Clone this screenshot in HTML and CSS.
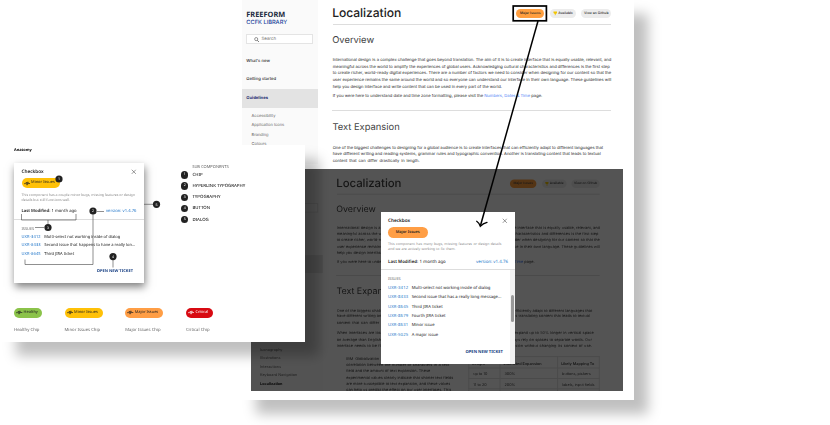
FILE: index.html
```html
<!DOCTYPE html>
<html lang="en">
<head>
<meta charset="utf-8">
<title>Freeform – Localization</title>
<link rel="stylesheet" href="styles.css">
</head>
<body>
<svg class="defs" width="0" height="0">
  <symbol id="pulse" viewBox="0 0 8 6"><path d="M0 3.2H2L2.9 1.4 3.7 5 4.7 1 5.5 3.7 6 3H8" fill="none" stroke="currentColor" stroke-width=".8" stroke-linejoin="round"/></symbol>
  <symbol id="close" viewBox="0 0 6 6"><path d="M.8.8 5.2 5.2M5.2.8.8 5.2" fill="none" stroke="#555" stroke-width=".65"/></symbol>
  <symbol id="search" viewBox="0 0 6 6"><circle cx="2.4" cy="2.3" r="1.7" fill="none" stroke="#444" stroke-width=".6"/><path d="M3.6 3.6 5.5 5.6" stroke="#444" stroke-width=".8"/></symbol>
  <symbol id="trophy" viewBox="0 0 5 5"><path d="M.5.6H4.5V1.8Q4.4 2.8 3.3 3L2.8 3.7V4.2H3.4V4.8H1.6V4.2H2.2V3.7L1.7 3Q.6 2.8.5 1.8Z" fill="#f2c500"/></symbol>
</svg>

<main class="canvas">
  <section class="board board-page">
    <div class="site">
      <nav class="side">
        <div class="brand">FREEFORM</div>
        <div class="library">CCFK LIBRARY</div>
        <div class="search"><svg><use href="#search"/></svg>Search</div>
        <div class="nav">What's new</div>
        <div class="nav">Getting started</div>
        <div class="nav current">Guidelines</div>
        <ul class="sub"><li>Accessibility</li><li>Application Icons</li><li>Branding</li><li>Colours</li></ul>
      </nav>
      <article class="main">
        <header class="head">
          <h1>Localization</h1>
          <div class="tags"><span class="tag major">Major Issues</span><span class="tag award"><svg><use href="#trophy"/></svg>Available</span><span class="tag github">View on Github</span></div>
        </header>
        <h2>Overview</h2>
        <div class="copy overview">
          <p>International design is a complex challenge that goes beyond translation. The aim of it is to create interface that is equally usable, relevant, and</p>
          <p>meaningful across the world to amplify the experiences of global users. Acknowledging cultural characteristics and differences is the first step</p>
          <p>to create richer, world-ready digital experiences. There are a number of factors we need to consider when designing for our content so that the</p>
          <p>user experience remains the same around the world and so everyone can understand our interface in their own language. These guidelines will</p>
          <p>help you design interface and write content that can be used in every part of the world.</p>
          <p>If you were here to understand date and time zone formatting, please visit the <a>Numbers, Dates &amp; Time</a> page.</p>
        </div>
        <h2 class="second">Text Expansion</h2>
        <div class="copy expansion">
          <p>One of the biggest challenges to designing for a global audience is to create interfaces that can efficiently adapt to different languages that</p>
          <p>have different writing and reading systems, grammar rules and typographic convention. Another is translating content that leads to textual</p>
          <p>content that can differ drastically in length.</p>
        </div>
      </article>
    </div>
  </section>

  <section class="board board-modal">
    <div class="site scaled">
      <nav class="side">
        <div class="brand">FREEFORM</div>
        <div class="library">CCFK LIBRARY</div>
        <div class="search"><svg><use href="#search"/></svg>Search</div>
        <div class="nav">What's new</div>
        <div class="nav">Getting started</div>
        <div class="nav current">Guidelines</div>
        <ul class="sub"><li>Accessibility</li><li>Application Icons</li><li>Branding</li><li>Colours</li><li>Components</li><li>Content</li><li>Data</li><li>Forms</li><li>Iconography</li><li>Illustrations</li><li>Interactions</li><li>Keyboard Navigation</li><li class="on">Localization</li></ul>
      </nav>
      <article class="main">
        <header class="head">
          <h1>Localization</h1>
          <div class="tags"><span class="tag major">Major Issues</span><span class="tag award"><svg><use href="#trophy"/></svg>Available</span><span class="tag github">View on Github</span></div>
        </header>
        <h2>Overview</h2>
        <div class="copy overview">
          <p>International design is a complex challenge that goes beyond translation. The aim of it is to create interface that is equally usable, relevant, and</p>
          <p>meaningful across the world to amplify the experiences of global users. Acknowledging cultural characteristics and differences is the first step</p>
          <p>to create richer, world-ready digital experiences. There are a number of factors we need to consider when designing for our content so that the</p>
          <p>user experience remains the same around the world and so everyone can understand our interface in their own language. These guidelines will</p>
          <p>help you design interface and write content that can be used in every part of the world.</p>
          <p>If you were here to understand date and time zone formatting, please visit the <a>Numbers, Dates &amp; Time</a> page.</p>
        </div>
        <h2 class="second">Text Expansion</h2>
        <div class="copy expansion">
          <p>One of the biggest challenges to designing for a global audience is to create interfaces that can efficiently adapt to different languages that</p>
          <p>have different writing and reading systems, grammar rules and typographic convention. Another is translating content that leads to textual</p>
          <p>content that can differ drastically in length.</p>
        </div>
        <div class="copy growth">
          <p>When interfaces are localized from English to other languages, the length of the text can often expand up to 50% longer in vertical space</p>
          <p>on average than English text, and you should know that some of the other languages do not always rely on spaces to separate words. Our</p>
          <p>interface needs to be flexible enough for every language so that it is able to handle text expansion without changing its context of use.</p>
        </div>
        <div class="split">
          <div class="copy note">
            <p>IBM Globalization provides a useful</p>
            <p>correlation between the number of characters in a text</p>
            <p>field and the amount of text expansion. These</p>
            <p>experimental values clearly indicate that shorter text fields</p>
            <p>are more susceptible to text expansion, and these values</p>
            <p>can help us predict the effect on our user interfaces. This</p>
          </div>
          <table>
            <tr><th>Length</th><th>Estimated Expansion</th><th>Likely Mapping To</th></tr>
            <tr><td>up to 10</td><td>300%</td><td>buttons, pickers</td></tr>
            <tr><td>11 to 20</td><td>200%</td><td>labels, input fields</td></tr>
            <tr><td></td><td></td><td></td></tr>
          </table>
        </div>
      </article>
    </div>
    <div class="scrim"></div>
  </section>

  <section class="board board-anatomy">
    <h3>Anatomy</h3>
    <div class="anatomy">
      <div class="dialog minor-dialog">
        <div class="title"><b>Checkbox</b><svg><use href="#close"/></svg></div>
        <span class="chip amber"><svg><use href="#pulse"/></svg>Minor Issues</span>
        <div class="desc"><p>This component has a couple minor bugs, missing features or design</p><p class="short">details but still functions well.</p></div>
        <div class="meta"><span><b>Last Modified:</b> 1 month ago</span><a>version: v1.4.76</a></div>
        <div class="issues">
          <h4>ISSUES</h4>
          <div class="issue"><a>UXR-3412</a><span>Multi-select not working inside of dialog</span></div>
          <div class="issue"><a>UXR-8433</a><span>Second issue that happens to have a really lon...</span></div>
          <div class="issue"><a>UXR-8645</a><span>Third JIRA ticket</span></div>
          <div class="open">OPEN NEW TICKET</div>
        </div>
      </div>
      <div class="legend">
        <h4>SUB COMPONENTS</h4>
        <div><i>1</i>CHIP</div>
        <div><i>2</i>HYPERLINK TYPOGRAPHY</div>
        <div><i>3</i>TYPOGRAPHY</div>
        <div><i>4</i>BUTTON</div>
        <div><i>5</i>DIALOG</div>
      </div>
    </div>
    <div class="chips">
      <div><span class="chip green"><svg><use href="#pulse"/></svg>Healthy</span><p>Healthy Chip</p></div>
      <div><span class="chip amber"><svg><use href="#pulse"/></svg>Minor Issues</span><p>Minor Issues Chip</p></div>
      <div><span class="chip orange"><svg><use href="#pulse"/></svg>Major Issues</span><p>Major Issues Chip</p></div>
      <div><span class="chip red"><svg><use href="#pulse"/></svg>Critical</span><p>Critical Chip</p></div>
    </div>
  </section>

  <section class="dialog major-dialog">
    <div class="title"><b>Checkbox</b><svg><use href="#close"/></svg></div>
    <span class="chip orange plain">Major Issues</span>
    <div class="desc"><p>This component has many bugs, missing features or design details</p><p class="short">and we are actively working to fix them.</p></div>
    <div class="meta"><span><b>Last Modified:</b> 1 month ago</span><a>version: v1.4.76</a></div>
    <div class="scroll">
      <div class="issues">
        <h4>ISSUES</h4>
        <div class="issue"><a>UXR-3412</a><span>Multi-select not working inside of dialog</span></div>
        <div class="issue"><a>UXR-8433</a><span>Second issue that has a really long message...</span></div>
        <div class="issue"><a>UXR-8645</a><span>Third JIRA ticket</span></div>
        <div class="issue"><a>UXR-8679</a><span>Fourth JIRA ticket</span></div>
        <div class="issue"><a>UXR-8631</a><span>Minor issue</span></div>
        <div class="issue"><a>UXR-5025</a><span>A major issue</span></div>
        <div class="open">OPEN NEW TICKET</div>
      </div>
      <div class="track"><div class="thumb"></div></div>
    </div>
  </section>

  <svg class="notes" width="830" height="425" viewBox="0 0 830 425">
    <g fill="none" stroke="#444" stroke-width=".6">
      <path d="M97 211.5H104M93 214V264.5H25V259.5M21.5 214V220H76V214M48 220V224M35 227.5H44M113 260V267.5M144 204.3H153"/>
    </g>
    <g fill="#222">
      <circle cx="59" cy="179" r="3.6"/><circle cx="93" cy="211" r="3.6"/><circle cx="48" cy="227.5" r="3.6"/><circle cx="113" cy="256.6" r="3.6"/><circle cx="156.5" cy="204.3" r="3.6"/>
    </g>
    <g class="num"><text x="59" y="180.3">1</text><text x="93" y="212.3">2</text><text x="48" y="228.8">3</text><text x="113" y="257.9">4</text><text x="156.5" y="205.6">5</text></g>
    <g fill="none" stroke="#000" stroke-width="1.5">
      <rect x="513.2" y="6" width="33.2" height="14.8" stroke-width="1.7"/>
      <path d="M538 21 480.5 225.5"/>
      <path d="M476.7 221.3Q479.3 223 480.3 226.3 483 223.3 487 222.3" stroke-width="1.3" stroke-linecap="round"/>
    </g>
  </svg>
</main>
</body>
</html>
```
FILE: styles.css
```css
* { box-sizing: border-box; margin: 0; padding: 0; }
body { background: #fff; overflow: hidden; }
.defs { position: absolute; }
.canvas { position: relative; width: 830px; height: 425px; overflow: hidden; font-family: "Noto Sans", sans-serif; white-space: nowrap; text-rendering: geometricPrecision; }

.board { position: absolute; background: #fff; }
.board-page { left: 242px; top: 0; width: 392px; height: 400px; box-shadow: 14px 14px 12px rgba(0, 0, 0, .25); }
.board-modal { left: 251px; top: 169px; width: 372px; height: 222px; overflow: hidden; }
.board-anatomy { left: 2px; top: 145px; width: 302.5px; height: 197px; box-shadow: 14px 14px 12px rgba(0, 0, 0, .25); }
.scrim { position: absolute; inset: 0; background: rgba(0, 0, 0, .67); }

/* documentation site */
.site { display: flex; width: 392px; font-family: Inter, sans-serif; color: #222; }
.scaled { transform: scale(.945); transform-origin: 0 0; margin-top: 2px; height: 235px; color: #444; }
.side { width: 76px; background: #fafafa; padding-top: 11px; }
.brand { font: bold 7.4px/9px "Noto Sans", sans-serif; color: #1b2b40; padding-left: 4.3px; }
.library { font: 500 5.7px/6px Inter, sans-serif; color: #24459c; padding-left: 4.3px; }
.search { display: flex; align-items: center; width: 66.5px; height: 10px; margin: 8.3px 0 12.8px 4.3px; padding-left: 7px; border: .7px solid #e4e4e4; background: #fff; font-size: 4.4px; color: #777; gap: 1.7px; }
.search svg { width: 5.5px; height: 5.5px; }
.nav { height: 17.7px; line-height: 10px; padding-left: 4.3px; font-size: 4.2px; font-weight: 500; }
.nav.current { height: 19px; line-height: 19px; background: #e3e3e3; color: #1f2d70; font-weight: 700; margin-top: -3.6px; }
.sub { list-style: none; padding: 3px 0 0 9.6px; font-size: 4px; line-height: 9.4px; color: #666; }
.sub li { height: 9.4px; }
.scaled .sub li { height: 9.13px; }
.sub .on { font-weight: 700; color: #111; }
.main { width: 278.5px; margin-left: 14.7px; }
.head { display: flex; justify-content: space-between; align-items: center; height: 24.7px; padding-top: 2.6px; border-bottom: .9px solid #ddd; }
h1 { font-size: 12.1px; line-height: 14px; font-weight: 500; letter-spacing: -.05px; margin-left: -.5px; }
.tags { display: flex; gap: 5.5px; }
.tag { display: flex; align-items: center; justify-content: center; height: 9px; padding-top: .6px; border-radius: 5px; background: #ececec; font-size: 3.4px; font-weight: 500; }
.tag.major { width: 28px; background: #ff9e3f; }
.award { width: 26px; gap: 1.2px; }
.award svg { width: 4.5px; height: 4.5px; }
.github { width: 30px; }
h2 { font-size: 9.4px; line-height: 12px; font-weight: 400; color: #444; margin: 10.7px 0 9.9px -.5px; }
h2.second { margin: 0 0 10.4px -.3px; padding-top: 10.9px; border-top: .9px solid #ddd; }
.copy { font-size: 4.12px; line-height: 6.57px; }
.copy p { height: 6.57px; text-align-last: justify; }
.copy a { color: #4a80f5; }
.overview { height: 53px; }
.overview p:nth-child(2) { width: 277px; }
.overview p:nth-child(5) { width: 169px; }
.overview p:nth-child(6) { width: 209px; margin-top: 3.2px; }
.expansion p:nth-child(1) { width: 270.5px; }
.expansion p:nth-child(2) { width: 268px; }
.expansion p:nth-child(3) { width: 87px; }
.growth { margin-top: 4.9px; }
.growth p:nth-child(1) { width: 272px; }
.growth p:nth-child(2), .growth p:nth-child(3) { width: 270px; }
.split { display: flex; justify-content: space-between; align-items: flex-start; margin-top: 6.3px; padding-left: 10px; }
.note { padding-top: .8px; }
.note p { width: 109px; }
.note p:nth-child(1) { width: 72px; }
.note p:nth-child(3) { width: 89px; }
.note p:nth-child(5) { width: 110px; }
table { width: 139px; margin-top: .5px; table-layout: fixed; border-collapse: collapse; font-size: 4px; line-height: 5px; }
th, td { border: 1px solid #ddd; padding: 0 4px; text-align: left; height: 11px; }
th { height: 12.7px; padding: 1.5px 3px 0; font-weight: 600; }
th:first-child { width: 33px; }
th:last-child { width: 44px; }

/* dialogs */
.dialog { background: #fff; font-size: 4.4px; color: #222; }
.dialog a { color: #2477c9; }
.title { display: flex; justify-content: space-between; align-items: center; height: 8px; font-size: 4.7px; }
.title b { font-weight: 600; padding-top: .8px; }
.title svg { width: 5.6px; height: 5.6px; }
.chip { display: flex; align-items: center; width: 38px; height: 10px; padding-left: 2px; gap: 1px; border-radius: 5px; font-size: 3.95px; line-height: 6px; color: #222; }
.chip svg { width: 6.6px; height: 5px; }
.chip.plain { width: 39.5px; height: 11px; border-radius: 5.5px; justify-content: center; padding: .6px 0 0; font-weight: 600; font-size: 3.9px; }
.green { background: #8bc34a; }
.amber { background: #ffc107; }
.orange { background: #ff9e45; }
.red { background: #d80a12; }
.chip.red { color: #fff; }
.desc { color: #8a8a8a; font-size: 3.5px; line-height: 5px; }
.desc p { height: 5px; text-align-last: justify; }
.meta { display: flex; justify-content: space-between; line-height: 8px; height: 8px; }
.meta b { font-weight: 600; }
h4 { font-size: 3.9px; font-weight: 400; line-height: 8px; height: 8px; color: #666; }
.issue { display: flex; height: 8.8px; line-height: 8.8px; font-size: 4.05px; }
.issue a { flex: none; width: 22.7px; letter-spacing: .1px; }
.open { text-align: right; font-size: 4px; font-weight: 700; color: #173f83; line-height: 8px; }

.minor-dialog { width: 130px; height: 120px; padding: 5px 7.5px 0; box-shadow: 1px 4px 8px rgba(0, 0, 0, .5); }
.minor-dialog .chip { margin-top: 2.3px; }
.minor-dialog .desc { margin-top: 4.4px; }
.minor-dialog .desc p { width: 112px; }
.minor-dialog .desc .short { width: 48.5px; }
.minor-dialog .meta { margin-top: 5.4px; font-size: 4.2px; }
.minor-dialog .issues { border-top: .6px solid #ddd; margin: 2.6px -7.5px 0; padding: 6px 11px 0 7.5px; }
.minor-dialog .issue { margin-right: -8px; }
.minor-dialog .open { margin-top: 7.7px; }

.major-dialog { position: absolute; left: 381px; top: 212px; width: 134px; height: 152px; padding: 4.5px 7px 0; }
.major-dialog .chip { margin-top: 2.5px; }
.major-dialog .desc { margin-top: 4.3px; }
.major-dialog .desc p { width: 113.5px; }
.major-dialog .desc .short { width: 67.5px; }
.major-dialog .meta { margin-top: 5.7px; }
.scroll { display: flex; margin: 3px -7px 0; height: 95px; border-top: .6px solid #ddd; }
.scroll .issues { flex: 1; min-width: 0; padding: 6.2px 7px 0; }
.scroll .issue { height: 9.3px; line-height: 9.3px; font-size: 4.2px; }
.scroll .issue a { width: 23.7px; letter-spacing: .15px; }
.scroll .open { margin-top: 9px; font-size: 4.15px; }
.track { flex: none; width: 5px; padding: 25.5px 1px 0; background: #f1f1f1; }
.thumb { height: 27px; border-radius: 1.5px; background: #999; }

/* anatomy */
.board-anatomy { padding-left: 12px; }
h3 { font-size: 3.9px; line-height: 6px; font-weight: 700; padding-top: 3.4px; height: 18px; }
.anatomy { display: flex; gap: 37.2px; }
.legend { font-size: 4.35px; font-weight: 500; color: #222; }
.legend h4 { margin-left: 11px; margin-top: .8px; margin-bottom: -.5px; font-size: 4.05px; }
.legend div { display: flex; align-items: center; gap: 3.9px; height: 11.2px; line-height: 8px; }
.legend div:nth-child(2) { height: 7.5px; }
.legend div:nth-child(3) { margin-top: 1.7px; }
.legend i { width: 7.3px; height: 7.3px; border-radius: 50%; background: #222; color: #fff; font: 3.5px/7.3px "Noto Sans", sans-serif; text-align: center; }
.chips { display: grid; grid-template-columns: 50.5px 60.7px 60.7px 40px; margin-top: 24.5px; font-size: 4.25px; color: #666; }
.chips p { margin-top: 8.4px; line-height: 8px; }
.chips .green { width: 28px; }
.chips .red { width: 27px; }
.notes { position: absolute; left: 0; top: 0; }
.num { fill: #fff; font-size: 3.5px; text-anchor: middle; }
```
